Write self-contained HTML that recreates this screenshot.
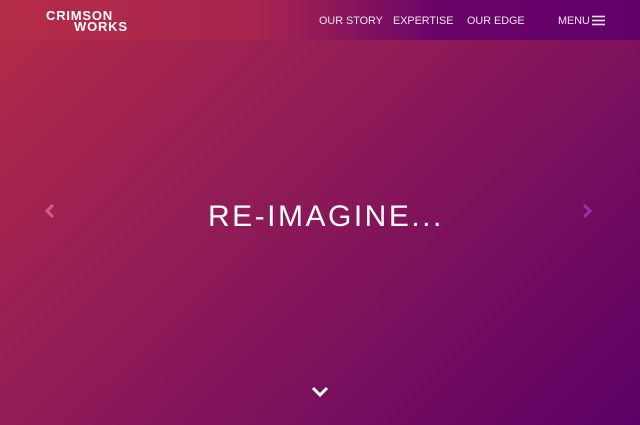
<!DOCTYPE html>
<html><head><style>
html,body{margin:0;padding:0;width:640px;height:425px;overflow:hidden}
body{background:linear-gradient(135deg,#b42c47 0%,#8e1a58 45%,#5c0066 100%);font-family:"Liberation Sans",sans-serif;position:relative;color:#fff}
.hdr{position:absolute;left:0;top:0;width:640px;height:40px;background:linear-gradient(90deg,#b52c48 0%,#a82550 40%,#6a0568 68%,#62006a 100%)}
.logo{position:absolute;left:46px;top:10px;font-weight:bold;font-size:13px;line-height:11px;letter-spacing:0.8px}
.nav{position:absolute;top:15px;font-size:10.8px;letter-spacing:0;color:#f2e6f0;white-space:nowrap}
.title{position:absolute;left:208px;top:200px;font-size:30px;letter-spacing:2.5px;color:#fff;white-space:nowrap}
</style></head><body>
<div class="hdr"></div>
<div class="logo">CRIMSON<br><span style="margin-left:28px">WORKS</span></div>
<div class="nav" style="left:319px">OUR STORY</div>
<div class="nav" style="left:393px">EXPERTISE</div>
<div class="nav" style="left:467px">OUR EDGE</div>
<div class="nav" style="left:558px">MENU</div>
<svg style="position:absolute;left:592px;top:15px" width="13" height="11"><g stroke="#f2e6f0" stroke-width="1.6"><line x1="0" y1="1.5" x2="13" y2="1.5"/><line x1="0" y1="5.5" x2="13" y2="5.5"/><line x1="0" y1="9.5" x2="13" y2="9.5"/></g></svg>
<div class="title">RE-IMAGINE...</div>
<svg style="position:absolute;left:44px;top:203px" width="12" height="16"><polyline points="9,2 3,8 9,14" fill="none" stroke="#d8578f" stroke-width="3"/></svg>
<svg style="position:absolute;left:581px;top:203px" width="12" height="16"><polyline points="3,2 9,8 3,14" fill="none" stroke="#a52aa0" stroke-width="3"/></svg>
<svg style="position:absolute;left:311px;top:386px" width="18" height="12"><polyline points="2,2 9,9 16,2" fill="none" stroke="#fff" stroke-width="3"/></svg>
</body></html>
